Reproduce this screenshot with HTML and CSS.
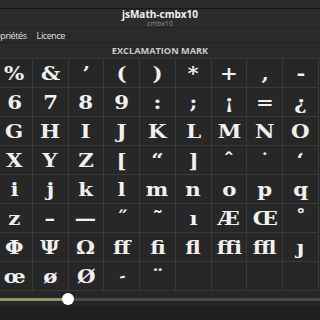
FILE: index.html
```html
<!DOCTYPE html>
<html lang="fr">
<head>
    <title>jsMath-cmbx10</title>
    <link rel="stylesheet" href="styles.css">
</head>
<body>
<div id="app">
    <div class="top-strip"></div>
    <header class="title-bar">
        <div class="title">jsMath-cmbx10</div>
        <div class="subtitle">cmbx10</div>
    </header>
    <nav class="tabs">
        <span class="tab">Propriétés</span>
        <span class="tab">Licence</span>
    </nav>
    <div class="char-name">EXCLAMATION MARK</div>
    <div class="glyph-grid" id="glyphGrid"></div>
    <div class="slider">
        <div class="slider-fill"></div>
        <div class="slider-thumb"></div>
    </div>
    <div class="bottom-bar"></div>
</div>

<script>
    const glyphs = [
        '%', '&', '’', '(', ')', '*', '+', ',', '-',
        '6', '7', '8', '9', ':', ';', '¡', '=', '¿',
        'G', 'H', 'I', 'J', 'K', 'L', 'M', 'N', 'O',
        'X', 'Y', 'Z', '[', '“', ']', 'ˆ', '˙', '‘',
        'i', 'j', 'k', 'l', 'm', 'n', 'o', 'p', 'q',
        'z', '–', '—', '˝', '˜', 'ı', 'Æ', 'Œ', '˚',
        'Φ', 'Ψ', 'Ω', 'ff', 'fi', 'fl', 'ffi', 'ffl', 'ȷ',
        'œ', 'ø', 'Ø', 'stroke', '¨', '', '', '', ''
    ];
    const grid = document.getElementById('glyphGrid');
    glyphs.forEach((glyph) => {
        const cell = document.createElement('div');
        cell.className = 'glyph';
        if (glyph === 'stroke') {
            cell.innerHTML = '<span class="stroke">-</span>';
        } else if (glyph !== '') {
            cell.innerHTML = `<span class="glyph-text">${glyph}</span>`;
        }
        grid.appendChild(cell);
    });
</script>
</body>
</html>
```

FILE: styles.css
```css
body {
    margin: 0;
    background-color: #272727;
    font-family: "Open Sans", "Noto Sans", sans-serif;
    overflow: hidden;
}
#app {
    width: 320px;
    height: 320px;
    overflow: hidden;
    display: flex;
    flex-direction: column;
}
.top-strip {
    height: 8px;
    background-color: #2b2b2b;
    border-bottom: 1px solid #161616;
    flex-shrink: 0;
}
.title-bar {
    height: 18px;
    background-color: #2c2c2c;
    border-bottom: 1px solid #232323;
    display: flex;
    flex-direction: column;
    align-items: center;
    justify-content: center;
    flex-shrink: 0;
}
.title {
    color: #f2f2f2;
    font-weight: bold;
    font-size: 10px;
    line-height: 10px;
}
.subtitle {
    margin-top: 1px;
    color: #8e8e8e;
    font-size: 7px;
    line-height: 7px;
}
.tabs {
    height: 14px;
    background-color: #2a2a2a;
    border-bottom: 1px solid #222;
    display: flex;
    align-items: center;
    gap: 10px;
    margin-left: -13px;
    flex-shrink: 0;
}
.tab {
    color: #e0e0e0;
    font-size: 9px;
    letter-spacing: -0.4px;
}
.char-name {
    height: 15px;
    background-color: #2a2a2a;
    border-bottom: 1px solid #3a3a3a;
    color: #c8c8c8;
    font-weight: bold;
    font-size: 9.2px;
    display: flex;
    align-items: center;
    justify-content: center;
    flex-shrink: 0;
}
.glyph-grid {
    width: 322px;
    margin-left: -3px;
    display: grid;
    grid-template-columns: repeat(9, 1fr);
    grid-auto-rows: 29px;
    flex-shrink: 0;
}
.glyph {
    border-right: 1px solid #3a3a3a;
    border-bottom: 1px solid #3a3a3a;
    color: #f0f0f0;
    font-family: "DejaVu Serif", "Liberation Serif", serif;
    font-weight: bold;
    font-size: 19px;
    display: flex;
    align-items: center;
    justify-content: center;
}
.glyph-text {
    display: inline-block;
    transform: scaleX(1.12);
}
.stroke {
    display: inline-block;
    transform: rotate(-15deg);
    font-size: 15px;
}
.slider {
    position: relative;
    height: 15px;
    background-color: #272727;
    flex-shrink: 0;
}
.slider::before {
    content: '';
    position: absolute;
    left: 0;
    right: 0;
    top: 7px;
    height: 3px;
    background-color: #484848;
}
.slider-fill {
    position: absolute;
    left: 0;
    top: 7px;
    width: 68px;
    height: 3px;
    background-color: #8a9868;
}
.slider-thumb {
    position: absolute;
    left: 62px;
    top: 2px;
    width: 12px;
    height: 12px;
    border-radius: 50%;
    background-color: #fff;
}
.bottom-bar {
    flex: 1;
    background-color: #1f1f1f;
}
```
